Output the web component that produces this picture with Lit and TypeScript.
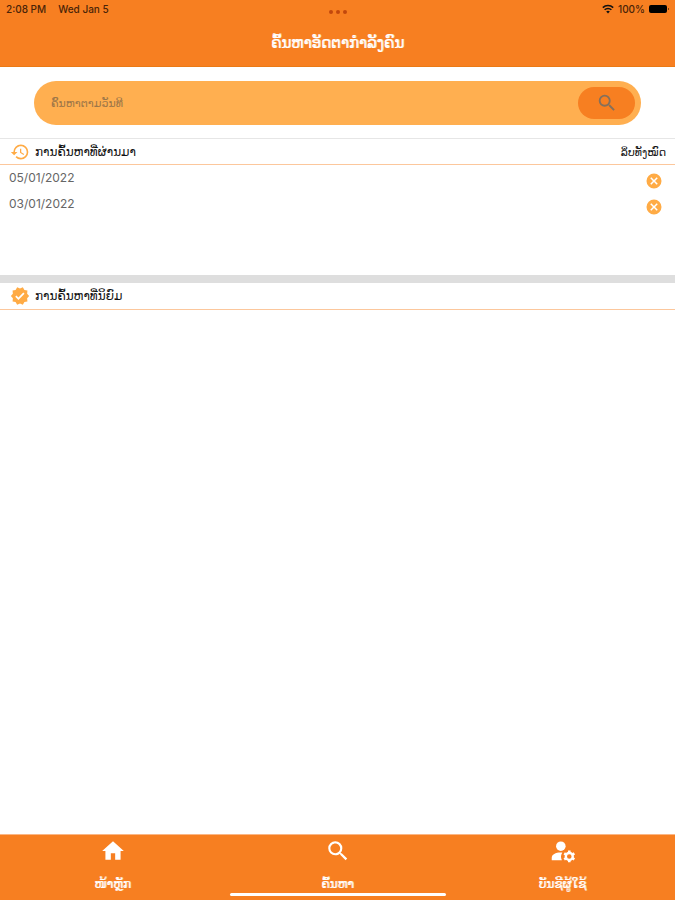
import { LitElement, html, css, svg } from "lit";
import { customElement, state } from "lit/decorators.js";

const searchPath = svg`<path d="M15.5 14h-.79l-.28-.27A6.47 6.47 0 0 0 16 9.5 6.5 6.5 0 1 0 9.5 16c1.61 0 3.09-.59 4.23-1.57l.27.28v.79l5 4.99L20.49 19l-4.99-5zm-6 0C7.01 14 5 11.99 5 9.5S7.01 5 9.5 5 14 7.01 14 9.5 11.99 14 9.5 14z"/>`;
const homePath = svg`<path d="M10 20v-6h4v6h5v-8h3L12 3 2 12h3v8z"/>`;
const accountPath = svg`<circle cx="10" cy="7.6" r="4.4"/><path d="M1.6 20.5v-2.2c0-3 3.4-4.9 8.4-4.9h1.4a7 7 0 0 0-.4 7.1z"/><circle cx="17.8" cy="17" r="3.2" fill="none" stroke="currentColor" stroke-width="2.2"/><path fill="none" stroke="currentColor" stroke-width="2.4" d="M17.8 11.6v2.2M17.8 20.2v2.2M13.1 14.3l1.9 1.1M20.6 18.6l1.9 1.1M13.1 19.7l1.9-1.1M20.6 15.4l1.9-1.1"/>`;
const historyPath = svg`<path d="M13 3a9 9 0 0 0-9 9H1l3.89 3.89.07.14L9 12H6c0-3.87 3.13-7 7-7s7 3.13 7 7-3.13 7-7 7c-1.93 0-3.68-.79-4.94-2.06l-1.42 1.42A8.95 8.95 0 0 0 13 21a9 9 0 0 0 0-18zm-1 5v5l4.28 2.54.72-1.21-3.5-2.08V8z"/>`;
const badgePath = svg`<path d="m23 12-2.44-2.79.34-3.69-3.61-.82-1.89-3.2L12 2.96 8.6 1.5 6.71 4.69 3.1 5.5l.34 3.7L1 12l2.44 2.79-.34 3.7 3.61.82L8.6 22.5l3.4-1.47 3.4 1.46 1.89-3.19 3.61-.82-.34-3.69zm-12.91 4.72-3.8-3.81 1.48-1.48 2.32 2.33 5.85-5.87 1.48 1.48z"/>`;
const closePath = svg`<path d="M12 2a10 10 0 1 0 0 20 10 10 0 0 0 0-20zm5 13.59L15.59 17 12 13.41 8.41 17 7 15.59 10.59 12 7 8.41 8.41 7 12 10.59 15.59 7 17 8.41 13.41 12z"/>`;

const icon = (path: unknown, name: string) =>
  html`<svg class=${name} viewBox="0 0 24 24" aria-hidden="true">${path}</svg>`;

@customElement("app-root")
export class AppRoot extends LitElement {
  @state() private recent = ["05/01/2022", "03/01/2022"];

  static styles = css`
    * { box-sizing: border-box; }
    :host {
      display: flex;
      flex-direction: column;
      min-height: 100vh;
      background: #fff;
      color: #111;
      font-family: Inter, "DejaVu Sans", sans-serif;
      font-size: 12px;
      line-height: 24px;
    }
    svg { display: block; fill: currentColor; }
    button {
      border: 0;
      padding: 0;
      background: none;
      font: inherit;
      color: inherit;
      cursor: pointer;
    }
    .top { background: #f77f21; border-bottom: 1px solid #ea7a16; }
    .status {
      display: grid;
      grid-template-columns: 1fr auto 1fr;
      align-items: center;
      height: 18px;
      padding: 0 6px;
      font-size: 10px;
      line-height: 18px;
      font-weight: 500;
      color: #4a2408;
    }
    .when { display: flex; gap: 12px; }
    .dots { display: flex; gap: 3px; padding-top: 5px; }
    .dots i { width: 4px; height: 4px; border-radius: 50%; background: #c2480c; }
    .power { display: flex; justify-content: flex-end; align-items: center; gap: 4px; }
    .wifi { width: 12px; height: 12px; color: #111; }
    .battery { width: 20px; height: 8px; color: #000; }
    h1 {
      margin: 0;
      height: 48px;
      font-size: 15px;
      line-height: 50px;
      font-weight: 400;
      text-align: center;
      color: #fff;
      text-shadow: 1px 0 0 #fffa;
    }
    .search {
      display: flex;
      align-items: center;
      margin: 14px 34px 13px;
      height: 44px;
      padding: 0 6px 0 17px;
      border-radius: 22px;
      background: #ffaf50;
    }
    .search input {
      flex: 1;
      min-width: 0;
      border: 0;
      padding: 0;
      outline: 0;
      background: none;
      font: inherit;
      font-size: 11px;
      color: #555;
    }
    .search input::placeholder { color: #9c7648; opacity: 1; }
    .go {
      display: flex;
      align-items: center;
      justify-content: center;
      width: 57px;
      height: 32px;
      border-radius: 16px;
      background: #f77f21;
      color: #84705c;
    }
    .glass { width: 22px; height: 22px; }
    .heading {
      display: flex;
      align-items: center;
      height: 27px;
      padding: 0 9px 0 10px;
      border-bottom: 1px solid #fcc79c;
    }
    .first { border-top: 1px solid #e6e6e6; }
    .mark { width: 20px; height: 20px; margin-right: 5px; color: #ffab45; }
    h2 { flex: 1; margin: 0; font-size: 12px; font-weight: 400; }
    .clear { font-size: 11px; }
    .list { list-style: none; margin: 0; padding: 0 12px 0 9px; min-height: 110px; }
    .list li {
      display: flex;
      justify-content: space-between;
      align-items: center;
      height: 26px;
      color: #666;
    }
    .cross { width: 18px; height: 18px; color: #ffab45; }
    .list button { padding-top: 5px; }
    .popular { flex: 1; border-top: 8px solid #dedede; }
    nav {
      position: relative;
      display: grid;
      grid-template-columns: repeat(3, 1fr);
      height: 66px;
      border-top: 1px solid #fbb684;
      background: #f77f21;
    }
    nav a {
      display: flex;
      flex-direction: column;
      align-items: center;
      gap: 8px;
      padding-top: 3px;
      color: #fff;
      text-decoration: none;
      font-size: 12px;
      text-shadow: 1px 0 0 #fffa;
    }
    .tab { width: 26px; height: 26px; }
    .bar {
      position: absolute;
      bottom: 4px;
      left: 34%;
      right: 34%;
      height: 3px;
      border-radius: 2px;
      background: #fff;
    }
  `;

  private remove(date: string) {
    this.recent = this.recent.filter((d) => d !== date);
  }

  render() {
    return html`
      <header class="top">
        <div class="status">
          <div class="when"><span>2:08 PM</span><span>Wed Jan 5</span></div>
          <div class="dots"><i></i><i></i><i></i></div>
          <div class="power">
            <svg class="wifi" viewBox="0 0 12 12" aria-hidden="true">
              <path d="M6 10.6 4.2 8.5a2.6 2.6 0 0 1 3.6 0z" />
              <path d="M.8 4.6a7.4 7.4 0 0 1 10.4 0M2.6 6.8a4.8 4.8 0 0 1 6.8 0" fill="none" stroke="currentColor" stroke-width="1.5" />
            </svg>
            <span>100%</span>
            <svg class="battery" viewBox="0 0 20 8" aria-hidden="true">
              <rect width="18" height="8" rx="2" />
              <rect x="19" y="3" width="1" height="2" opacity=".5" />
            </svg>
          </div>
        </div>
        <h1>ຄົ້ນຫາອັດຕາກຳລັງຄົນ</h1>
      </header>

      <form class="search" role="search" @submit=${(e: Event) => e.preventDefault()}>
        <input type="text" placeholder="ຄົ້ນຫາຕາມວັນທີ" aria-label="ຄົ້ນຫາຕາມວັນທີ" />
        <button class="go" aria-label="ຄົ້ນຫາ">${icon(searchPath, "glass")}</button>
      </form>

      <section>
        <div class="heading first">
          ${icon(historyPath, "mark")}
          <h2>ການຄົ້ນຫາທີ່ຜ່ານມາ</h2>
          <button class="clear" type="button" @click=${() => (this.recent = [])}>ລຶບທັງໝົດ</button>
        </div>
        <ul class="list">
          ${this.recent.map(
            (date) => html`<li>
              <span>${date}</span>
              <button type="button" aria-label=${"ລຶບ " + date} @click=${() => this.remove(date)}>
                ${icon(closePath, "cross")}
              </button>
            </li>`
          )}
        </ul>
      </section>

      <section class="popular">
        <div class="heading">
          ${icon(badgePath, "mark")}
          <h2>ການຄົ້ນຫາທີ່ນິຍົມ</h2>
        </div>
      </section>

      <nav>
        <a href="#home">${icon(homePath, "tab")}<span>ໜ້າຫຼັກ</span></a>
        <a href="#search" aria-current="page">${icon(searchPath, "tab")}<span>ຄົ້ນຫາ</span></a>
        <a href="#account">${icon(accountPath, "tab")}<span>ບັນຊີຜູ້ໃຊ້</span></a>
        <div class="bar"></div>
      </nav>
    `;
  }
}
